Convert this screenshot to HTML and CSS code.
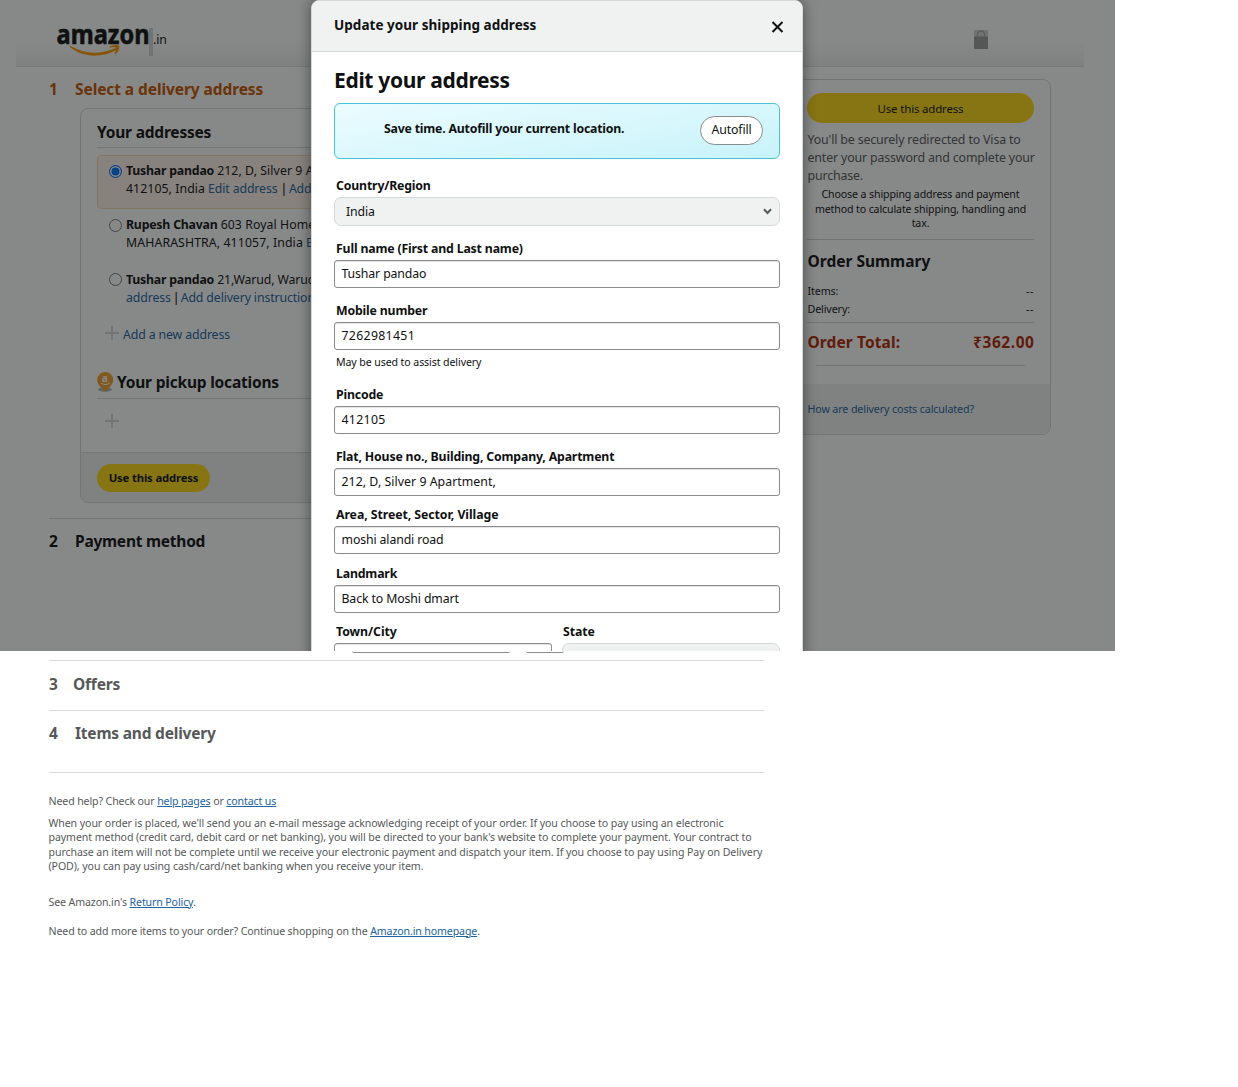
FILE: index.html
```html
<!DOCTYPE html>
<html lang="en">
<head>
<meta charset="utf-8">
<title>Select a delivery address</title>
<link rel="stylesheet" href="styles.css">
</head>
<body>
<div class="viewport">
  <header class="site-header">
    <svg class="logo" width="93" height="30" viewBox="0 0 93 30">
      <text class="logo-word" x="0.500" y="17" textLength="93" lengthAdjust="spacingAndGlyphs">amazon</text>
      <path class="smile" d="M14 18.800c15 8.500 30 9 45.500 2.200l1.500 1.700C46 31.500 26 30.500 13.500 19.800z"/>
      <path class="smile" d="M53.500 19.800c4-2.600 9-2.100 9.600-1.100.7 1.100-.3 6.300-3.600 8.500l-1-.5c1.100-2.600 2-5.200 1.400-5.900s-3.300-.4-6.300-.1z"/>
    </svg>
    <span class="logo-bar"></span>
    <span class="logo-tld">.in</span>
    <svg class="lock" width="14" height="19" viewBox="0 0 14 19">
      <rect width="14" height="19" fill="#d3d3d3"/>
      <path d="M3.500 7V4.500a3.500 3.500 0 0 1 7 0V7" fill="none" stroke="#a4a4a4" stroke-width="1.300"/>
      <rect y="6.500" width="14" height="12.500" fill="#9b9b9b"/>
    </svg>
  </header>

  <div class="columns">
    <main class="steps">
      <h2 class="step active"><span class="num">1</span><span>Select a delivery address</span></h2>
      <section class="card">
        <div class="card-body">
          <h3 class="card-title"><span>Your addresses</span></h3>
          <div class="address selected">
            <span class="radio on"></span>
            <p><b>Tushar pandao</b> <span class="num-text">212, D, Silver 9 Apartment,</span><br><span class="num-text">412105, India</span> <a>Edit address</a> <i class="bar">|</i> <a>Add delivery</a></p>
          </div>
          <div class="address second-row">
            <span class="radio"></span>
            <p><b>Rupesh Chavan</b> <span class="num-text">603 Royal Homes,</span><br><span class="num-text wide-text">MAHARASHTRA, 411057, India</span> <a>Edit</a></p>
          </div>
          <div class="address third-row">
            <span class="radio"></span>
            <p><b>Tushar pandao</b> 21,Warud, Warud<br><a>address</a> <i class="bar tight">|</i> <a>Add delivery instructions</a></p>
          </div>
          <div class="add"><span class="plus"></span><a>Add a new address</a></div>
          <h3 class="card-title pickup">
            <svg width="17" height="20" viewBox="0 0 17 20">
              <ellipse cx="8" cy="17.500" rx="7" ry="2.200" fill="#b5b5b5"/>
              <path d="M8.200 0a8 8 0 0 1 8 8c0 2.500-1.200 4.300-2.700 6.200L8.200 19.800 2.900 14.200C1.400 12.300.2 10.500.2 8a8 8 0 0 1 8-8z" fill="#f3a02c"/>
              <text class="pin-a" x="4.700" y="9.500">a</text>
              <path d="M4 11.200c3 1.800 5.500 1.800 8.500 0" fill="none" stroke="#fff" stroke-width="1"/>
            </svg>
            <span>Your pickup locations</span>
          </h3>
          <div class="add second"><span class="plus"></span></div>
        </div>
        <div class="card-foot"><span class="btn small">Use this address</span></div>
      </section>
      <h2 class="step second-step"><span class="num">2</span><span>Payment method</span></h2>
    </main>

    <aside class="summary">
      <div class="summary-body">
        <span class="btn wide">Use this address</span>
        <p class="redirect">You'll be securely redirected to Visa to<br>enter your password and complete your<br>purchase.</p>
        <p class="choose">Choose a shipping address and payment<br>method to calculate shipping, handling and<br>tax.</p>
        <h3 class="sum-title"><span>Order Summary</span></h3>
        <div class="line"><span>Items:</span><span class="dash">--</span></div>
        <div class="line"><span>Delivery:</span><span class="dash">--</span></div>
        <div class="total"><span>Order Total:</span><span class="price">₹362.00</span></div>
        <div class="short-rule"></div>
      </div>
      <div class="summary-foot"><a>How are delivery costs calculated?</a></div>
    </aside>
  </div>

  <div class="scrim"></div>

  <div class="modal">
    <div class="modal-head">
      <span>Update your shipping address</span>
      <svg width="13" height="12" viewBox="0 0 13 12"><path d="M1.500 1l10 10M11.500 1l-10 10" stroke="#0f1111" stroke-width="2"/></svg>
    </div>
    <div class="modal-body">
      <h1>Edit your address</h1>
      <div class="autofill"><b>Save time. Autofill your current location.</b><span class="pill">Autofill</span></div>
      <label class="l1">Country/Region</label>
      <div class="field select"><span>India</span><svg width="9" height="7" viewBox="0 0 9 7"><path d="M1 1.300l3.500 3.700L8 1.300" fill="none" stroke="#565959" stroke-width="2"/></svg></div>
      <label>Full name (First and Last name)</label>
      <div class="field">Tushar pandao</div>
      <label>Mobile number</label>
      <div class="field digits">7262981451</div>
      <p class="hint">May be used to assist delivery</p>
      <label class="l4">Pincode</label>
      <div class="field digits">412105</div>
      <label>Flat, House no., Building, Company, Apartment</label>
      <div class="field flat">212, D, Silver 9 Apartment,</div>
      <label class="l6">Area, Street, Sector, Village</label>
      <div class="field">moshi alandi road</div>
      <label class="l7">Landmark</label>
      <div class="field">Back to Moshi dmart</div>
      <div class="pair">
        <div class="city"><label>Town/City</label><div class="field"></div></div>
        <div class="state"><label>State</label><div class="field select"></div></div>
      </div>
    </div>
  </div>
</div>
<div class="seam"><span class="seam-a"></span><span class="seam-b"></span></div>

<div class="rest">
  <h2 class="step r3"><span class="num">3</span><span>Offers</span></h2>
  <h2 class="step r4"><span class="num">4</span><span>Items and delivery</span></h2>
  <div class="help">
    <p>Need help? Check our <a>help pages</a> or <a>contact us</a></p>
    <p class="p2">When your order is placed, we'll send you an e-mail message acknowledging receipt of your order. If you choose to pay using an electronic<br>payment method (credit card, debit card or net banking), you will be directed to your bank's website to complete your payment. Your contract to<br>purchase an item will not be complete until we receive your electronic payment and dispatch your item. If you choose to pay using Pay on Delivery<br>(POD), you can pay using cash/card/net banking when you receive your item.</p>
    <p class="p3">See Amazon.in's <a>Return Policy</a>.</p>
    <p class="p4">Need to add more items to your order? Continue shopping on the <a>Amazon.in homepage</a>.</p>
  </div>
</div>
</body>
</html>
```
FILE: styles.css
```css
* { box-sizing: border-box; }
body, h1, h2, h3, p { margin: 0; }
body {
  background: #fff;
  color: #0f1111;
  font: 12.3px/18px "Noto Sans", sans-serif;
  letter-spacing: -0.12px;
  white-space: nowrap;
}
a { color: #2162a1; }

.viewport { position: relative; width: 1115px; height: 651px; overflow: hidden; }

.site-header {
  display: flex;
  width: 1068px;
  height: 67px;
  margin-left: 16px;
  padding: 27px 96px 0 40px;
  border-bottom: 1px solid #ddd;
  background: linear-gradient(to bottom, #fff 60%, #f0f0f0 100%);
}
.logo { overflow: visible; }
.logo-word { font: 700 27px/28px "Noto Sans", sans-serif; fill: #0f1111; stroke: #0f1111; stroke-width: 0.6px; letter-spacing: 0; }
.smile { fill: #ff9900; }
.logo-bar { width: 4px; height: 28px; margin-top: 1px; background: #d5d5d5; }
.logo-tld { margin-top: 4px; }
.lock { margin: 3px 0 0 auto; }

.columns { display: flex; }
.steps { width: 715px; margin-left: 49px; }
.step { display: flex; font-size: 15.5px; line-height: 22px; letter-spacing: -0.2px; }
.num { width: 26px; }
.step.active { color: #c45500; padding-top: 11px; letter-spacing: -0.08px; }
.card { margin: 8px 0 0 31px; height: 395px; border: 1px solid #d5d9d9; border-radius: 8px; overflow: hidden; }
.card-body { height: 343px; padding: 12px 16px 0; }
.card-title { height: 27px; border-bottom: 1px solid #d5d9d9; font-size: 15.5px; line-height: 22px; letter-spacing: -0.2px; }
.address { display: flex; height: 54px; padding: 6px 11px; border: 1px solid transparent; }
.address.selected { margin-top: 7px; background: #fff3ea; border-color: #fbd8b4; border-radius: 4px; }
.address b { letter-spacing: -0.2px; }
.num-text { letter-spacing: 0.07px; }
.wide-text { letter-spacing: 0.1px; }
.bar { margin: 0 -0.5px 0 0; font-style: normal; font-weight: 500; letter-spacing: -1px; }
.bar.tight { margin: 0 -1px; }
.second-row { height: 55px; }
.radio { width: 13px; height: 13px; margin: 3px 4px 0 0; border: 1px solid #767676; border-radius: 50%; background: #fff; }
.third-row .radio { margin-top: 2px; }
.radio.on { border-color: #0075ff; background: #0075ff; box-shadow: inset 0 0 0 1.500px #fff; }
.add { display: flex; height: 18px; margin: 8px 0 0 8px; gap: 4px; }
.plus {
  width: 14px; height: 14px;
  background: linear-gradient(#d8d8d8, #d8d8d8) 50% 50% / 14px 2px no-repeat, linear-gradient(#d8d8d8, #d8d8d8) 50% 50% / 2px 14px no-repeat;
}
.pickup { display: flex; height: 28px; gap: 3px; margin-top: 27px; }
.pickup svg { margin-top: 1px; overflow: visible; }
.pin-a { font: 700 10px/10px "Noto Sans", sans-serif; fill: #fff; }
.add.second { margin-top: 15px; }
.card-foot { height: 50px; padding: 11px 16px; border-top: 1px solid #d5d9d9; background: #f0f2f2; }
.btn { display: block; background: #ffd814; border-radius: 15px; text-align: center; }
.btn.small { width: 113px; height: 28px; line-height: 28px; font-size: 11.300px; font-weight: 700; letter-spacing: -0.15px; }
.second-step { margin-top: 15px; padding-top: 11px; border-top: 1px solid #d5d9d9; letter-spacing: -0.25px; }

.summary { width: 260px; height: 356px; margin: 12px 0 0 27px; border: 1px solid #d5d9d9; border-radius: 8px; overflow: hidden; }
.summary-body { height: 304px; padding: 13px 16px 0 15px; }
.btn.wide { height: 30px; line-height: 31px; font-size: 11.500px; letter-spacing: -0.18px; }
.redirect { margin-top: 8px; padding-left: 0.500px; color: #565959; font-size: 12.400px; letter-spacing: -0.16px; }
.choose { margin-top: 2px; padding-bottom: 8px; border-bottom: 1px solid #d5d9d9; text-align: center; font-size: 10.600px; line-height: 14.600px; letter-spacing: -0.12px; }
.sum-title { margin: 10px 0; padding-left: 0.500px; font-size: 15.500px; line-height: 22px; letter-spacing: 0; }
.line { display: flex; justify-content: space-between; padding-left: 0.500px; font-size: 10.700px; }
.dash { letter-spacing: 0.500px; }
.total { display: flex; justify-content: space-between; margin-top: 4px; padding: 8px 0 0 0.500px; border-top: 1px solid #d5d9d9; color: #b12704; font-size: 15.500px; font-weight: 700; line-height: 22px; letter-spacing: 0.1px; }
.price { margin-right: -0.500px; letter-spacing: 0.550px; }
.short-rule { margin: 12px 9px 0; border-top: 1px solid #d5d9d9; }
.summary-foot { height: 50px; padding: 16px 15.500px; background: #f0f2f2; font-size: 10.700px; }

.scrim { position: absolute; inset: 0; background: rgba(15, 17, 17, 0.5); }

.modal {
  position: absolute; left: 311px; top: 0;
  width: 492px; height: 760px;
  background: #fff;
  border: 1px solid #d5d9d9;
  border-radius: 8px;
  box-shadow: 0 0 14px rgba(15, 17, 17, 0.5);
  overflow: hidden;
}
.modal-head {
  display: flex; justify-content: space-between;
  height: 51px; padding: 15px 18px 0 22px;
  background: #f0f2f2; border-bottom: 1px solid #d5d9d9;
  font-size: 13.500px; font-weight: 700; letter-spacing: 0.040px;
}
.modal-head svg { margin-top: 5px; }
.modal-body { padding: 13px 22px 0; }
h1 { font-size: 21px; line-height: 30px; letter-spacing: -0.320px; }
.autofill {
  display: flex; justify-content: space-between;
  height: 56px; margin-top: 8px; padding: 12px 16px 0 49px;
  border: 1px solid #4ac3d9; border-radius: 6px;
  background: linear-gradient(170deg, #ebfcff, #c8f3fa);
}
.autofill b { margin-top: 4px; letter-spacing: -0.2px; }
.pill { width: 63px; height: 29px; border: 1px solid #888c8c; border-radius: 15px; background: #fff; line-height: 26px; text-align: center; }
label { display: block; margin: 14px 2px 2px; font-weight: 700; letter-spacing: -0.17px; }
label.l1 { margin-top: 18px; }
label.l6 { margin-top: 10px; letter-spacing: -0.07px; }
label.l7 { margin-top: 11px; }
label.l4 { margin-top: 15px; }
.field { height: 28px; padding: 0 6.500px; border: 1px solid #888c8c; border-radius: 3px; line-height: 26px; box-shadow: inset 0 1px 1px rgba(15, 17, 17, 0.12); }
.digits { letter-spacing: 0.320px; }
.flat { letter-spacing: 0.050px; }
.select { display: flex; align-items: center; justify-content: space-between; height: 29px; padding: 0 7px 0 11px; border-color: #d5d9d9; border-radius: 7px; background: #f0f2f2; box-shadow: none; }
.hint { margin: 3px 2px 0; font-size: 10.600px; letter-spacing: -0.1px; }
.pair { display: flex; gap: 10px; }
.pair label { margin-top: 10px; letter-spacing: -0.05px; }
.pair .state label { margin-left: 1px; }
.city { width: 218px; }
.state { width: 218px; }

.seam { display: flex; height: 9px; padding-left: 352px; gap: 16px; }
.seam span { height: 2px; border-bottom: 1px solid #888c8c; }
.seam-a { width: 158px; border-radius: 0 0 3px 3px; }
.seam-b { width: 38px; border-radius: 0 0 6px 6px; }

.rest { width: 715px; margin-left: 49px; color: #565959; }
.rest .step { border-top: 1px solid #d5d9d9; padding-top: 12px; }
.r3 { height: 50px; }
.r3 .num { width: 24px; }
.r4 { height: 62px; }
.rest .r4 { padding-top: 11px; }
.help { border-top: 1px solid #d5d9d9; padding-top: 19px; font-size: 10.600px; letter-spacing: -0.12px; }
.help p { margin-left: -0.500px; }
.help a { text-decoration: underline; }
.help .p2 { margin-top: 6px; line-height: 14.400px; letter-spacing: -0.085px; }
.p3 { margin-top: 19px; }
.p4 { margin-top: 11px; }
```
